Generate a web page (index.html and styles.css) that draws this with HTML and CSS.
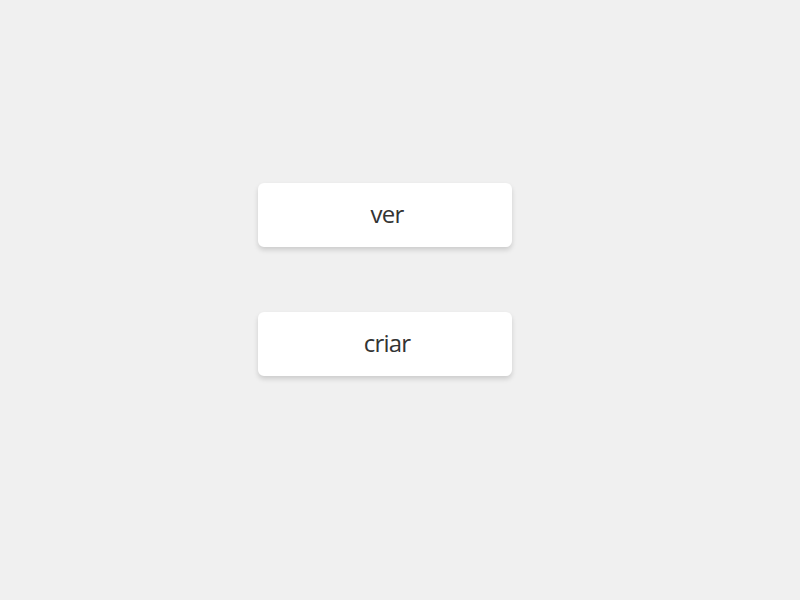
FILE: index.html
```html
<!DOCTYPE html>
<html>
<head>
<meta charset="utf-8">
<link rel="stylesheet" href="styles.css">
</head>
<body>
<main class="menu">
  <button class="btn">ver</button>
  <button class="btn">criar</button>
</main>
</body>
</html>
```
FILE: styles.css
```css
html, body {
  margin: 0;
  padding: 0;
  background: #f0f0f0;
  height: 100%;
}
.menu {
  display: flex;
  flex-direction: column;
  gap: 65px;
  padding: 183px 0 0 258px;
}
.btn {
  width: 254px;
  height: 64px;
  border: none;
  border-radius: 6px;
  background: #ffffff;
  box-shadow: 0 3px 5px rgba(0, 0, 0, 0.15);
  font-family: "Open Sans", "Noto Sans", sans-serif;
  font-size: 24px;
  letter-spacing: -0.8px;
  color: #333333;
  padding: 0 0 4px 4px;
  cursor: pointer;
}
```
